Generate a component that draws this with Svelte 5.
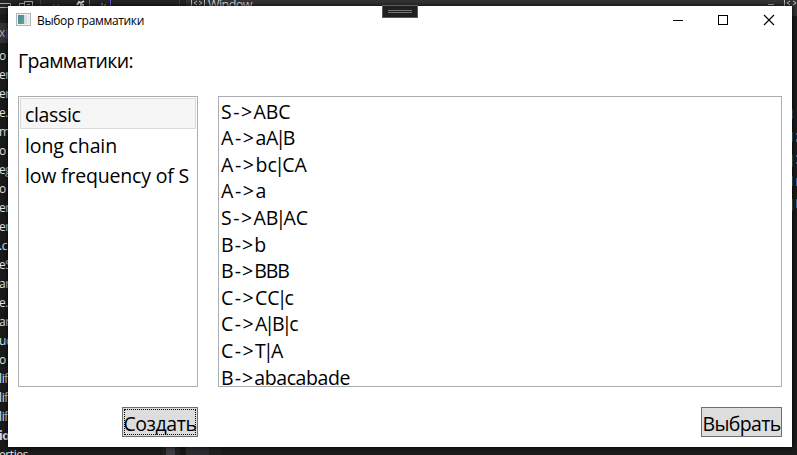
<script>
  const grammars = [
    { name: 'classic', width: 55.5 },
    { name: 'long chain', width: 92 },
    { name: 'low frequency of S', width: 164 }
  ];
  const headWidths = { S: 32.5, A: 34.6, B: 33.2, C: 34 };
  const rules = [
    { head: 'S', body: 'ABC', width: 37 },
    { head: 'A', body: 'aA|B', width: 39.4 },
    { head: 'A', body: 'bc|CA', width: 51.1 },
    { head: 'A', body: 'a', width: 10.2 },
    { head: 'S', body: 'AB|AC', width: 54.5 },
    { head: 'B', body: 'b', width: 11.8 },
    { head: 'B', body: 'BBB', width: 34.4 },
    { head: 'C', body: 'CC|c', width: 38.8 },
    { head: 'C', body: 'A|B|c', width: 43.2 },
    { head: 'C', body: 'T|A', width: 28.2 },
    { head: 'B', body: 'abacabade', width: 96 }
  ];
  const files = ['o', 'er', 'er', 'e.c', 'm', 'o', 'eg', 'o', 'er', 'er', '.c', 'eS', 'an', 'e.c', 'ar', 'uc', 'o', 'lif', 'lif', 'lif', 'io', 'erties'];

  // Tracks the letters so the label takes exactly the given width
  function fit(node, width) {
    const natural = node.getBoundingClientRect().width;
    node.style.letterSpacing = `${(width - natural) / node.textContent.length}px`;
  }
</script>

<div class="desktop">
  <div class="toolstrip">
    <svg width="797" height="14" viewBox="0 0 797 14">
      <rect width="797" height="14" fill="#242426" />
      <rect x="186" width="611" height="14" fill="#333334" />
      <path d="M0 3.5H10.500V12M0 7.500H8M19.500 6V3.500H24M24.500 6V1.500H32.500V6M27 4.500H30" fill="none" stroke="#aaa" />
      <path d="M40.500 0V6M179.500 0V6" stroke="#3d3d40" />
      <path d="M53 5h2M57 5h2" stroke="#777" />
      <path d="M77 5l2-3 2 1 3-2M80 5h4" stroke="#ccc" stroke-width="2" fill="none" />
      <path d="M89.500 0V6M110.500 0V6" stroke="#6255c6" />
      <path d="M102 3v3M106 4l-2 2" stroke="#b9a27a" />
      <path d="M191.500 0V6M204.500 0V6M197 1l-3 2 3 2M199 1l3 2-3 2M784.500 0V7M790 1l-3 2 3 2M793 1l3 2-3 2" stroke="#bbb" fill="none" />
      <path d="M768 4.500h6" stroke="#bbb" />
    </svg>
    <span class="tool-label"><span use:fit={44}>Window</span></span>
  </div>
  <div class="files">
    <div class="tab">x<i></i></div>
    {#each files as file, i}
      <div class="file" class:bold={i === 20}>{file}</div>
    {/each}
  </div>
  <svg class="code-edge" width="5" height="455" viewBox="0 0 5 455">
    <rect width="5" height="455" fill="#1a1c1d" />
    <rect y="7" width="5" height="9" fill="#333334" />
    <path d="M.5 109v10M.5 132v10M.5 176v10" stroke="#426776" />
    <path d="M.5 155v12M.5 199v12" stroke="#5f6546" />
    <path d="M4.500 133v2M4.500 139v3M4.500 155v2M4.500 162v2M4.500 178v8M4.500 199v9" stroke="#3d6eae" />
  </svg>
  <svg class="scroll-edge" width="60" height="8" viewBox="0 0 60 8">
    <rect width="60" height="8" fill="#202021" />
    <rect x="4" width="9" height="8" fill="#3e3e42" />
    <rect x="18" width="6" height="8" fill="#161616" />
    <rect x="24" width="23" height="8" fill="#2c2c2e" />
  </svg>

  <main class="window">
    <header>
      <svg class="app-icon" width="16" height="14" viewBox="0 0 16 14">
        <defs>
          <linearGradient id="pane" x2="1" y2="1">
            <stop stop-color="#4c81bd" /><stop offset="1" stop-color="#55ae6b" />
          </linearGradient>
        </defs>
        <rect x=".5" y=".5" width="14" height="12" fill="#f2f3f4" stroke="#aeb5bb" />
        <rect x="2" y="2" width="6" height="9" fill="url(#pane)" />
        <rect x="8" y="2" width="3" height="9" fill="#d9dee2" />
        <path d="M12.500 2v9" stroke="#e0e3e6" />
      </svg>
      <span class="title"><span use:fit={107}>Выбор грамматики</span></span>
      <svg class="controls" width="104" height="14" viewBox="0 0 104 14" shape-rendering="crispEdges">
        <path d="M1 7.500H11M46.500 2.500H55.500V11.500H46.500Z" fill="none" stroke="#000" />
        <path d="M92 2L102 12M102 2L92 12" stroke="#000" stroke-width="1.100" shape-rendering="auto" />
      </svg>
    </header>

    <div class="heading"><span use:fit={115}>Грамматики:</span></div>

    <section class="panels">
      <ul class="list">
        {#each grammars as grammar, i}
          <li class:selected={i === 0}><span use:fit={grammar.width}>{grammar.name}</span></li>
        {/each}
      </ul>
      <div class="rules">
        {#each rules as rule}
          <div class="rule"><span use:fit={headWidths[rule.head]}>{rule.head}-&gt;</span><span use:fit={rule.width}>{#each rule.body.split('|') as part, i}{#if i > 0}<span class="bar">|</span>{/if}{part}{/each}</span></div>
        {/each}
      </div>
    </section>

    <footer>
      <button class="create"><span use:fit={73}>Создать</span></button>
      <button class="choose"><span use:fit={78}>Выбрать</span></button>
    </footer>
  </main>

  <div class="grip"><i></i><i></i></div>
</div>

<style>
  .desktop {
    position: relative;
    width: 797px;
    height: 455px;
    overflow: hidden;
    background: #1b1b1c;
    font-family: "Open Sans", "Noto Sans", sans-serif;
    font-size: 19.500px;
    color: #000;
  }
  span { white-space: pre; }
  svg { display: block; flex: none; }
  .toolstrip { position: absolute; inset: 0 0 auto; height: 14px; }
  .tool-label {
    position: absolute;
    left: 208px;
    top: -4px;
    font-size: 12.500px;
    line-height: 18px;
    color: #d8d8d8;
  }
  .files {
    position: absolute;
    left: -1px;
    top: 23px;
    width: 30px;
    font-size: 12px;
    letter-spacing: -0.4px;
    color: #e4e4e4;
  }
  .tab {
    display: flex;
    height: 20px;
    line-height: 20px;
    background: #333335;
    color: #aaa;
    margin-bottom: 3px;
  }
  .tab i { width: 2px; height: 10px; margin: 6px 0 0 1px; background: #474594; }
  .file { height: 19px; line-height: 19px; white-space: nowrap; }
  .bold { font-weight: 700; }
  .code-edge { position: absolute; right: 0; top: 0; clip-path: inset(7px 0 0); }
  .scroll-edge { position: absolute; left: 162px; bottom: 0; }

  .window {
    position: absolute;
    left: 8px;
    top: 6px;
    width: 784px;
    height: 441px;
    display: flex;
    flex-direction: column;
    background: #fff;
    box-shadow: 0 0 5px #000;
  }
  header { display: flex; align-items: center; height: 28px; padding: 0 16px 0 8px; }
  .title { margin-left: 5px; flex: 1; font-size: 12px; line-height: 28px; padding-top: 1px; }
  .heading { height: 62px; padding: 14px 0 0 10px; box-sizing: border-box; line-height: 26px; }
  .panels { display: flex; gap: 20px; height: 291px; padding: 0 10px; }
  .list, .rules { box-sizing: border-box; border: 1px solid #abadb3; margin: 0; }
  .list { width: 180px; padding: 1px; list-style: none; }
  li {
    box-sizing: border-box;
    height: 30.600px;
    padding: 0 4px;
    border: 1px solid transparent;
    line-height: 32px;
  }
  li.selected { background: #f6f6f6; border-color: #dadada; }
  .rules { flex: 1; padding: 1.600px 2px 0; overflow: hidden; }
  .rule { height: 26.600px; line-height: 26.600px; }
  .bar { margin: 0 -2.700px; }
  footer { display: flex; justify-content: space-between; padding: 20px 10px 0 114px; }
  button {
    display: flex;
    justify-content: center;
    box-sizing: border-box;
    height: 30px;
    margin: 0;
    padding: 0;
    border: 1px solid #707070;
    background: #ddd;
    font: inherit;
    line-height: 32px;
    color: #000;
  }
  .create { width: 76px; outline: 1px dotted #000; outline-offset: -3px; }
  .choose { width: 81px; }

  .grip {
    position: absolute;
    left: 382px;
    top: 5px;
    box-sizing: border-box;
    width: 36px;
    height: 13px;
    padding: 4px 5px;
    display: flex;
    flex-direction: column;
    gap: 1px;
    border: 1px solid #5c5c5c;
    background: #202020;
  }
  .grip i { height: 1px; background: #777; }
</style>
